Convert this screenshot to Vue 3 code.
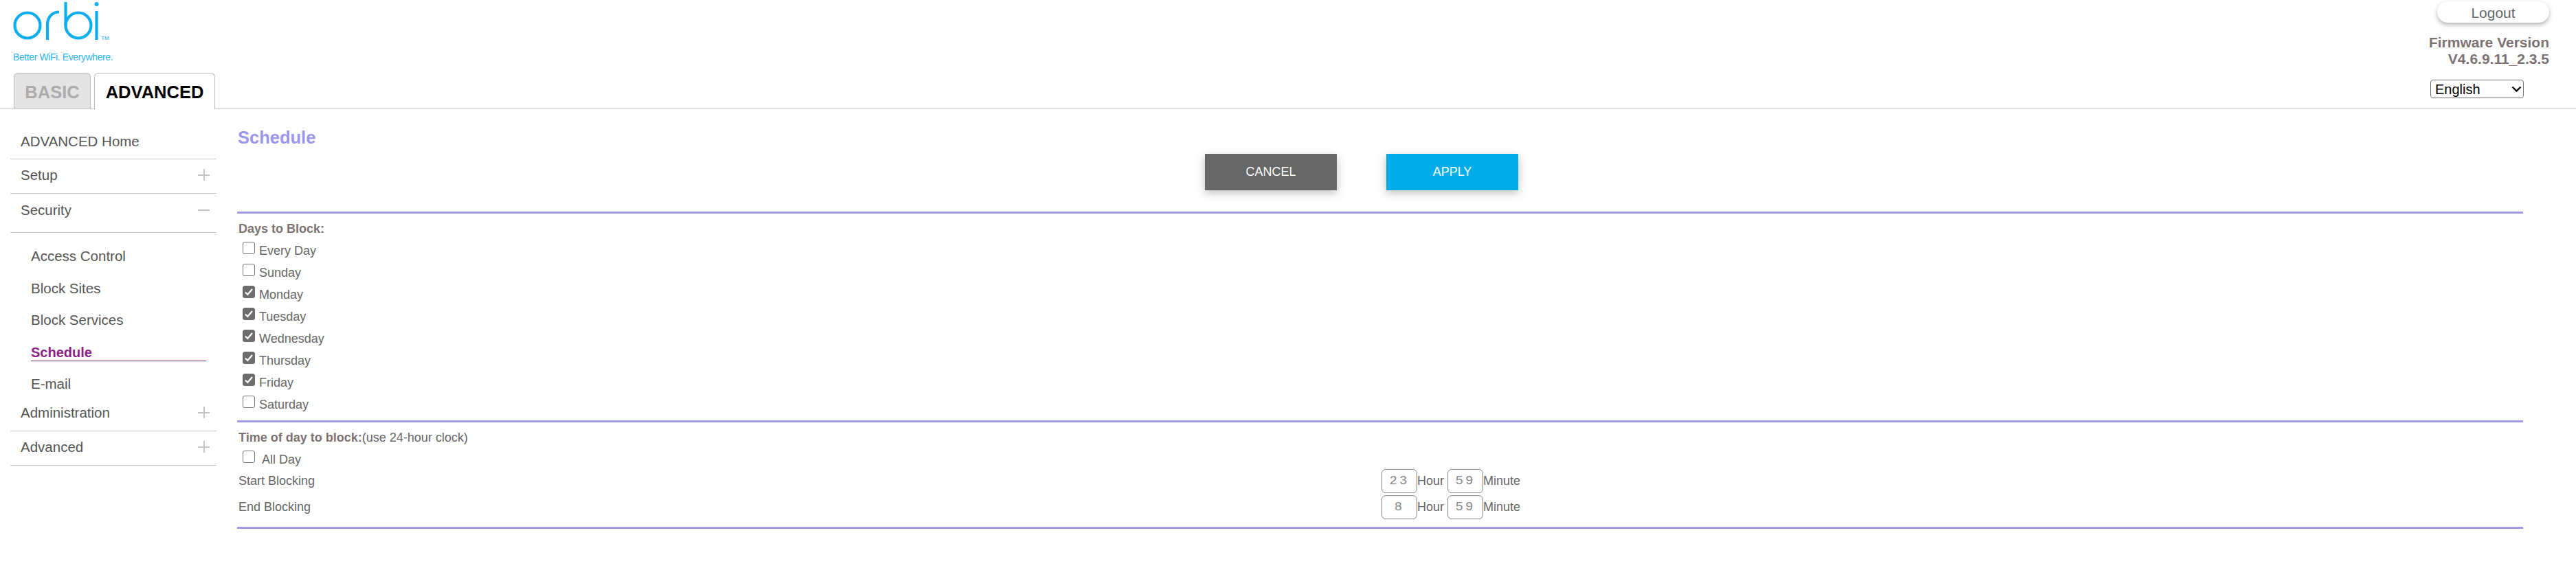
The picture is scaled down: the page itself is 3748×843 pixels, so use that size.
<template>
  <div class="page">
    <header class="top">
      <div class="brand">
        <svg class="logo" width="150" height="64" viewBox="0 0 150 64" fill="none" stroke="#0daeef" stroke-width="4.200">
          <circle cx="40" cy="37" r="18.500" />
          <path d="M69 58V36c0-11 7-18.500 17-18.500" />
          <circle cx="114" cy="37" r="18.500" />
          <path d="M95.500 3v35" />
          <path d="M140.500 16v42" />
          <circle cx="140.500" cy="6" r="3" fill="#0daeef" stroke="none" />
        </svg>
        <span class="tm">TM</span>
        <div class="tagline">Better WiFi. Everywhere.</div>
        <div class="tabs">
          <div class="tab basic">BASIC</div>
          <div class="tab advanced">ADVANCED</div>
        </div>
      </div>
      <div class="account">
        <button class="logout">Logout</button>
        <div class="firmware">Firmware Version<br />V4.6.9.11_2.3.5</div>
        <div class="lang-wrap">
          <select class="lang">
            <option>English</option>
          </select>
          <svg class="chevron" width="15" height="10" viewBox="0 0 15 10" fill="none"><path d="M1.500 1.500l6 6 6-6" stroke="#000" stroke-width="2.400" /></svg>
        </div>
      </div>
    </header>

    <div class="main">
      <nav class="side">
        <a class="nav-item home">ADVANCED Home</a>
        <a class="nav-item setup">Setup<span class="plus"></span></a>
        <a class="nav-item security">Security<span class="minus"></span></a>
        <div class="sub">
          <a v-for="s in subItems" :key="s" class="sub-item" :class="{ active: s === 'Schedule' }"><span>{{ s }}</span></a>
        </div>
        <a class="nav-item admin">Administration<span class="plus"></span></a>
        <a class="nav-item adv">Advanced<span class="plus"></span></a>
      </nav>

      <section class="content">
        <h1>Schedule</h1>
        <div class="buttons">
          <button class="btn cancel">CANCEL</button>
          <button class="btn apply">APPLY</button>
        </div>
        <hr />
        <div class="heading days-head">Days to Block:</div>
        <label v-for="d in days" :key="d.name" class="day">
          <span class="box" :class="{ on: d.on }">
            <svg v-if="d.on" width="18" height="18" viewBox="0 0 18 18" fill="none"><path d="M4 9.500l3.300 3.300L14 5" stroke="#fff" stroke-width="2.200" /></svg>
          </span><span>{{ d.name }}</span>
        </label>
        <hr class="second" />
        <div class="heading time-head">Time of day to block:<span>(use 24-hour clock)</span></div>
        <label class="day allday"><span class="box"></span><span>All Day</span></label>
        <div class="time-row">
          <div>Start Blocking</div>
          <div class="fields">
            <input value="23" />Hour<input value="59" />Minute
          </div>
        </div>
        <div class="time-row">
          <div>End Blocking</div>
          <div class="fields">
            <input value="8" />Hour<input value="59" />Minute
          </div>
        </div>
        <hr class="third" />
      </section>
    </div>
  </div>
</template>

<script setup>
const subItems = ['Access Control', 'Block Sites', 'Block Services', 'Schedule', 'E-mail']
const days = [
  { name: 'Every Day', on: false },
  { name: 'Sunday', on: false },
  { name: 'Monday', on: true },
  { name: 'Tuesday', on: true },
  { name: 'Wednesday', on: true },
  { name: 'Thursday', on: true },
  { name: 'Friday', on: true },
  { name: 'Saturday', on: false }
]
</script>

<style>
html, body { background: #fff; }
</style>

<style scoped>
.page { width: 3748px; height: 843px; overflow: hidden; font-family: "Liberation Sans", Arial, sans-serif; color: #666; font-size: 18px; }
.top { height: 158px; border-bottom: 1px solid #c4c4c4; box-sizing: content-box; display: flex; justify-content: space-between; }
.brand { position: relative; display: flex; flex-direction: column; width: 340px; }
.logo { display: block; flex: none; }
.tm { position: absolute; left: 147px; top: 51px; font-size: 8px; color: #0daeef; }
.tagline { margin: 10px 0 0 19px; height: 18px; line-height: 18px; font-size: 14px; letter-spacing: -.4px; color: #2fb4ec; white-space: nowrap; }
.tabs { display: flex; gap: 5px; margin: 14px 0 0 20px; align-items: flex-start; }
.tab { height: 52px; line-height: 54px; border: 1px solid #bbb; border-bottom: 0; border-radius: 6px 6px 0 0; box-sizing: border-box; font-weight: 700; font-size: 25.500px; text-align: center; }
.basic { width: 112px; background: #e3e3e3; color: #acacac; }
.advanced { width: 176px; height: 53px; background: #fff; color: #000; position: relative; }
.account { display: flex; flex-direction: column; align-items: flex-end; padding: 2px 39px 0 0; }
.logout { width: 163px; height: 31px; border: 0; border-radius: 16px; background: #fff; box-shadow: 0 3px 6px rgba(0, 0, 0, .3); font: 21px "Liberation Sans", Arial, sans-serif; color: #666; padding: 2px 0 0; }
.firmware { margin-top: 17px; font-weight: 700; font-size: 21px; line-height: 24px; color: #7d7272; text-align: right; }
.lang-wrap { position: relative; margin: 18px 37px 0 0; width: 136px; height: 27px; }
.lang { display: block; appearance: none; width: 136px; height: 27px; box-sizing: border-box; font: 20px "Liberation Sans", Arial, sans-serif; color: #000; background: #fff; border: 1px solid #767676; border-radius: 4px; padding: 0 0 0 6px; }
.chevron { position: absolute; right: 3px; top: 9px; pointer-events: none; }

.main { display: flex; }
.side { width: 300px; margin-left: 15px; padding-top: 21px; flex: none; }
.nav-item { display: flex; justify-content: space-between; align-items: center; padding: 0 10px 4px 15px; font-size: 20.500px; color: #555; border-bottom: 1px solid #c8c8c8; box-sizing: border-box; position: relative; }
.home { height: 52px; padding-bottom: 0; }
.setup, .admin, .adv { height: 50px; }
.security { height: 57px; padding-bottom: 9px; }
.plus, .minus { width: 17px; height: 17px; position: relative; display: block; }
.plus::before, .minus::before { content: ""; position: absolute; left: 0; right: 0; top: 8px; height: 1.500px; background: #c4c4c4; }
.plus::after { content: ""; position: absolute; top: 0; bottom: 0; left: 8px; width: 1.500px; background: #c4c4c4; }
.sub { height: 239px; box-sizing: border-box; padding: 11px 15px 0 30px; }
.sub-item { display: block; height: 46.500px; line-height: 46px; font-size: 20.500px; color: #555; }
.sub-item.active { color: #8b1f85; font-weight: 700; font-size: 20px; }
.sub-item.active span { display: block; height: 35px; line-height: 46px; border-bottom: 1px solid #8b1f85; }

.content { width: 3326px; margin-left: 30px; }
h1 { margin: 26px 0 0 1px; font-size: 25.500px; line-height: 30px; color: #9d95ea; font-weight: 700; }
.buttons { display: flex; gap: 72px; margin: 9px 0 0 1408px; }
.btn { width: 192px; height: 53px; border: 0; color: #fff; font: 18px "Liberation Sans", Arial, sans-serif; box-shadow: 0 4px 12px rgba(0, 0, 0, .25); }
.cancel { background: #676767; }
.apply { background: #00ade8; }
hr { height: 3px; margin: 0; border: 0; background: #9f99e8; }
.content > hr { margin-top: 31px; }
.content > hr.second { margin-top: 7px; }
.content > hr.third { margin-top: 10px; }
.heading { font-weight: 700; font-size: 18px; color: #7d7272; line-height: 22px; padding-left: 2px; }
.days-head { margin-top: 11px; }
.time-head { margin-top: 11px; }
.time-head span { font-weight: 400; color: #666; }
.day { display: flex; align-items: center; height: 32px; padding-left: 8px; }
.days-head + .day { margin-top: 5px; }
.box { width: 18px; height: 18px; border: 1.500px solid #767676; border-radius: 3px; box-sizing: border-box; margin: -8px 6px 0 0; display: block; flex: none; }
.box.on { background: #6d6d6d; border-color: #6d6d6d; }
.box svg { display: block; margin: -1.500px; }
.allday { margin-top: 9px; height: 24px; }
.allday .box { margin-right: 10px; }
.time-row { display: grid; grid-template-columns: 1665px 1fr; align-items: center; height: 38px; padding-left: 2px; }
.time-row .fields { margin-left: -2px; }
.fields { display: flex; align-items: center; }
.fields input { width: 52px; height: 35px; box-sizing: border-box; border: 1px solid #888; border-radius: 6px; text-align: center; font: 19px "Liberation Mono", monospace; letter-spacing: 3px; color: #888; background: #fff; padding: 0; outline: none; }
.fields input:nth-of-type(2) { margin-left: 5px; }
</style>
